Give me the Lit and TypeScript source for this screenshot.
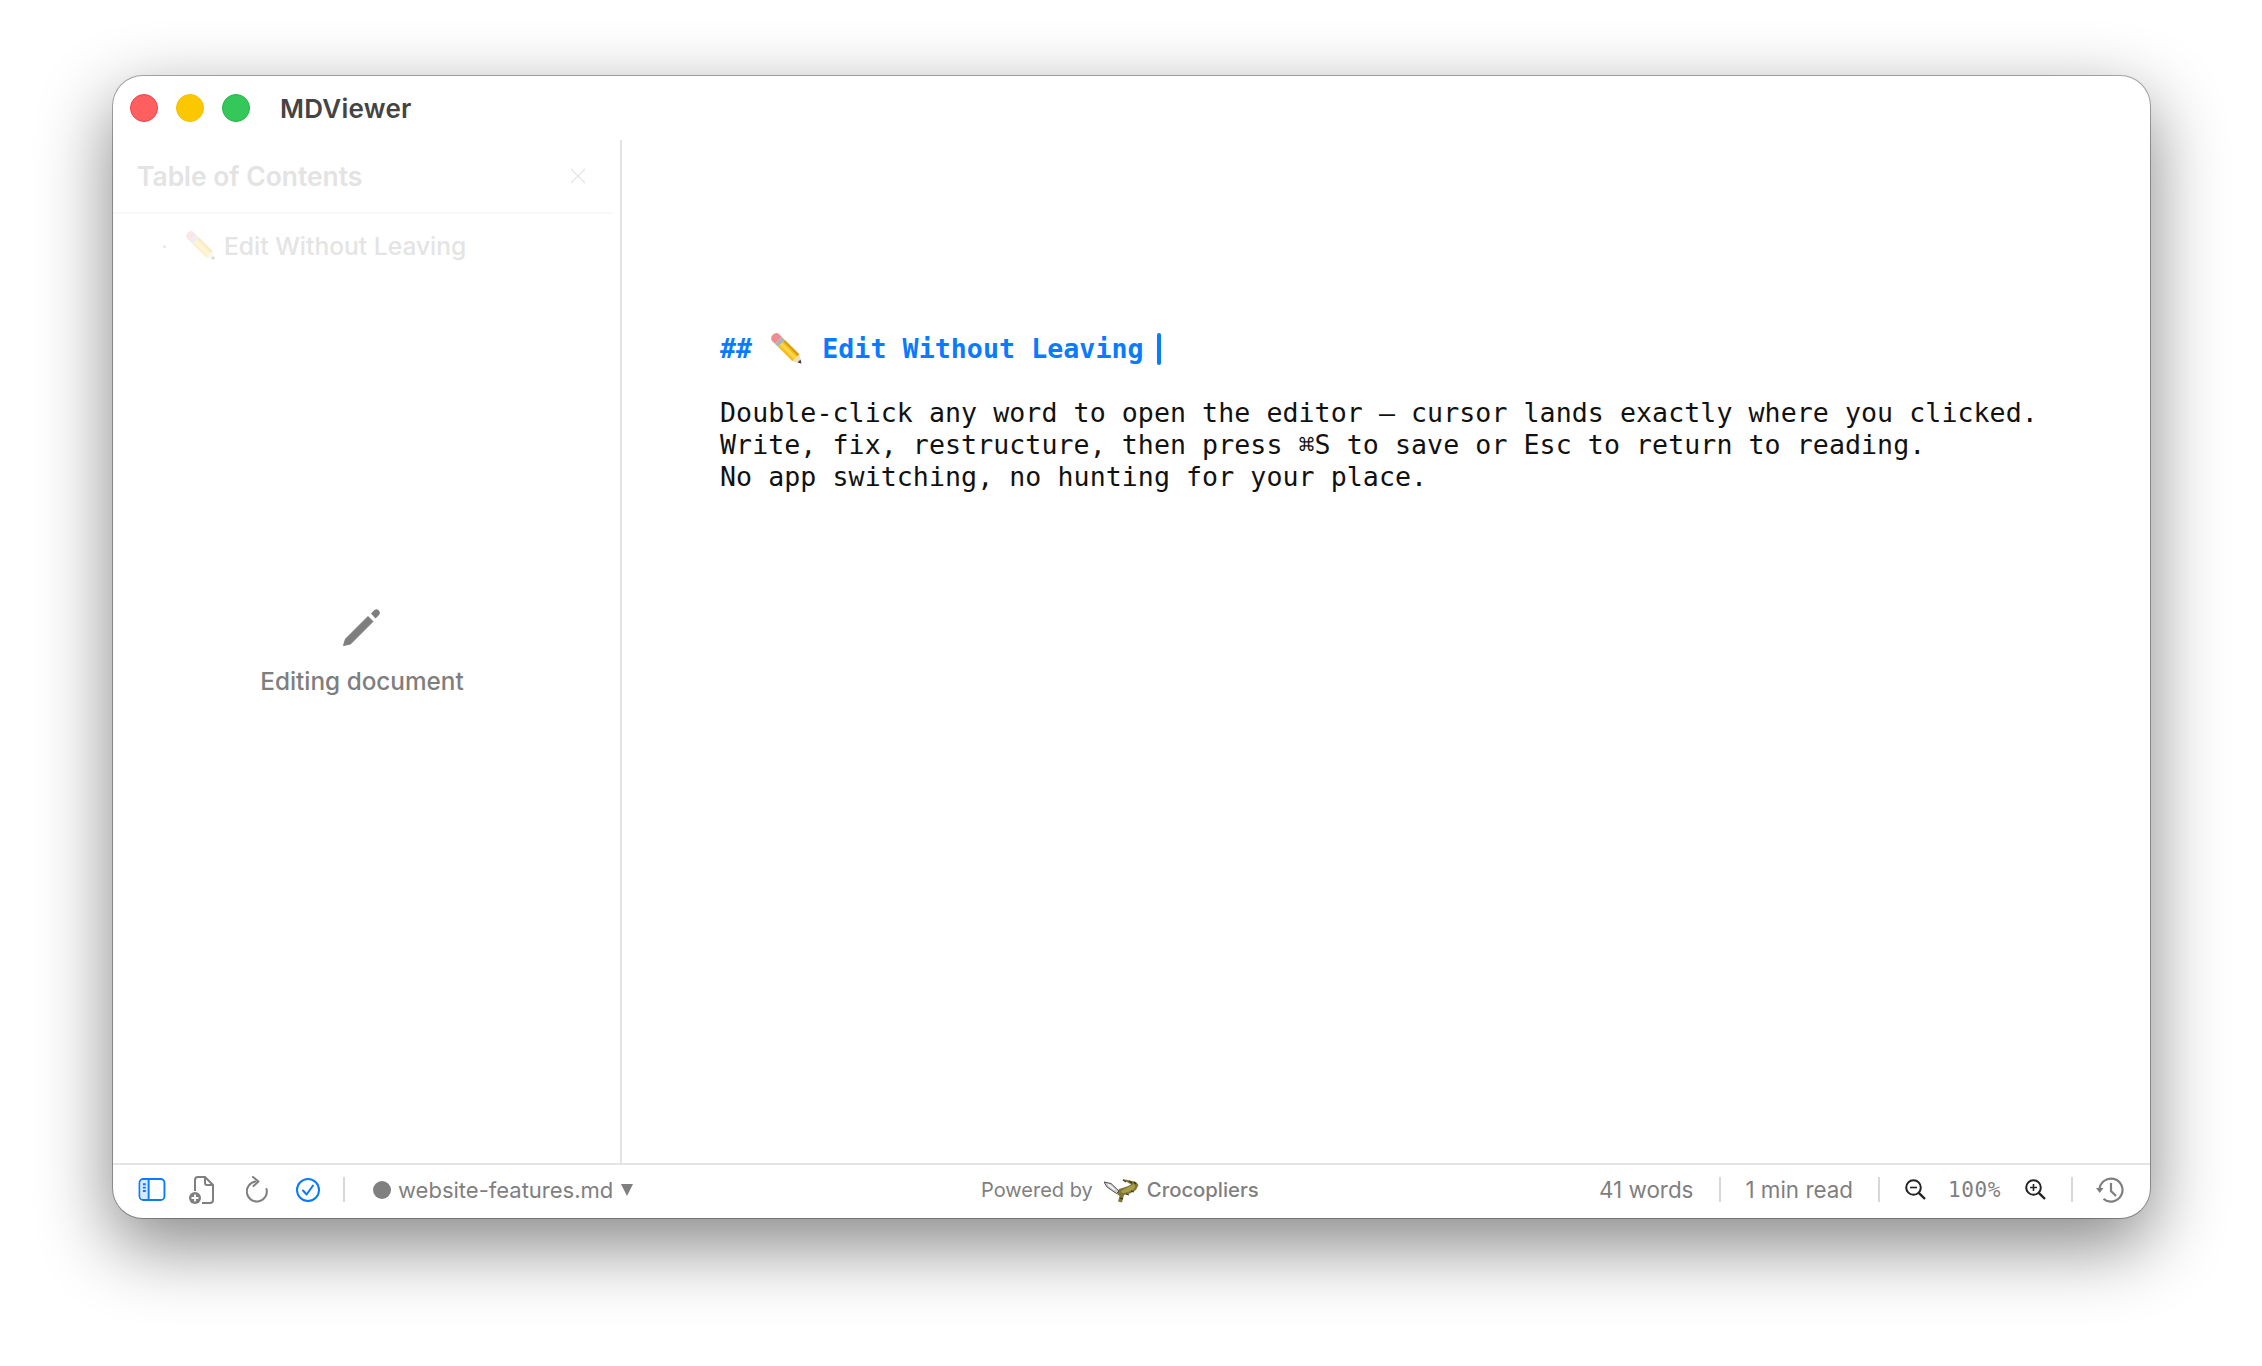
import { LitElement, html, css } from "lit";
import { customElement } from "lit/decorators.js";

const pencil = (cls: string) => html`<svg class=${cls} viewBox="0 0 36 36" aria-hidden="true">
  <g transform="rotate(225 18 18)">
    <path d="M-5 18 L4 12.5 V23.5 Z" fill="#f0dcb8"/>
    <path d="M-5 18 L-1.2 15.7 V20.3 Z" fill="#3c3c3c"/>
    <rect x="4" y="12.5" width="23" height="11" fill="#f6bf1e"/>
    <rect x="4" y="15.6" width="23" height="3.6" fill="#fcd548"/>
    <rect x="4" y="21" width="23" height="2.5" fill="#dc9c10"/>
    <rect x="27" y="12.5" width="4.5" height="11" fill="#a9b4bd"/>
    <path d="M31.5 12.5 H35.5 Q40.5 12.5 40.5 18 Q40.5 23.5 35.5 23.5 H31.5 Z" fill="#ee8c92"/>
  </g>
</svg>`;

@customElement("app-root")
export class AppRoot extends LitElement {
  static styles = css`
    :host {
      display: block;
      width: 2262px;
      height: 1366px;
      background: #fff;
      overflow: hidden;
      font-family: Inter, "Noto Sans", sans-serif;
    }
    .page { padding: 76px 112px 0 113px; }
    .window {
      width: 2037px;
      height: 1142px;
      border-radius: 30px;
      background: #fff;
      display: flex;
      flex-direction: column;
      box-shadow: 0 0 0 1px rgba(0,0,0,.3), 0 26px 72px 2px rgba(0,0,0,.47);
      overflow: hidden;
    }
    .titlebar {
      height: 64px;
      flex: none;
      display: flex;
      align-items: center;
      padding-left: 17px;
      box-sizing: border-box;
    }
    .light { width: 26px; height: 26px; border-radius: 50%; border: 1px solid; margin-right: 18px; box-sizing: content-box; }
    .red { background: #ff5f5f; border-color: #f0404a; }
    .yellow { background: #fbc800; border-color: #f2bf00; }
    .green { background: #34c759; border-color: #1fb840; margin-right: 30px; }
    .title { font-size: 26px; font-weight: 600; color: #444; letter-spacing: .25px; }
    .main { flex: 1; display: flex; min-height: 0; }
    .sidebar {
      width: 507px;
      flex: none;
      border-right: 2px solid #e4e4e4;
      position: relative;
      box-sizing: content-box;
    }
    .toc-head {
      height: 74px;
      margin-right: 8px;
      border-bottom: 2px solid #f8f8f8;
      display: flex;
      align-items: center;
      justify-content: space-between;
      padding: 0 26px 0 24px;
      box-sizing: border-box;
      color: #e3e3e3;
      font-size: 26.4px;
      font-weight: 600;
    }
    .toc-close { width: 16px; height: 16px; }
    .toc-item {
      display: flex;
      align-items: center;
      height: 64px;
      padding-left: 50px;
      color: #e4e4e4;
      font-size: 24.6px;
      font-weight: 500;
    }
    .toc-dot { width: 3px; height: 3px; border-radius: 50%; background: #e8e8e8; margin-right: 20px; }
    .toc-pencil { width: 30px; height: 30px; opacity: .22; margin-right: 8px; }
    .overlay {
      position: absolute;
      left: 0; right: 9px; top: 1px; bottom: 0;
      display: flex;
      flex-direction: column;
      align-items: center;
      justify-content: center;
      gap: 20px;
      color: #7e7e7e;
    }
    .overlay svg { width: 38px; height: 38px; }
    .overlay span { font-size: 24.3px; font-weight: 500; line-height: 30px; }
    .editor {
      flex: 1;
      padding: 193px 0 0 98px;
      font-family: "DejaVu Sans Mono", "Liberation Mono", monospace;
      font-size: 26.6px;
      line-height: 32px;
      color: #111;
      white-space: pre;
      letter-spacing: .06px;
    }
    .h { color: #0a7aff; font-weight: 700; display: flex; align-items: center; height: 32px; margin-bottom: 32px; }
    .emoji { width: 32px; height: 32px; margin: 0 19px 0 3px; flex: none; }
    .caret { display: inline-block; width: 4px; height: 32px; border-radius: 2px; background: #0a7aff; margin-left: 13px; }
    .statusbar {
      height: 55px;
      flex: none;
      border-top: 2px solid #e4e4e4;
      display: flex;
      align-items: center;
      box-sizing: border-box;
      color: #7f7f7f;
      font-size: 22px;
      padding: 0 26px 4px 25px;
      white-space: nowrap;
    }
    .icon { display: block; flex: none; }
    .sep { width: 2px; height: 25px; background: #d8d8d8; flex: none; }
    .dot { width: 18px; height: 18px; border-radius: 50%; background: #808080; flex: none; }
    .tri { width: 0; height: 0; border-left: 6px solid transparent; border-right: 6px solid transparent; border-top: 12px solid #7f7f7f; flex: none; }
    .left { display: flex; align-items: center; width: 843px; flex: none; }
    .center { display: flex; align-items: center; font-size: 20px; flex: none; }
    .brand { font-weight: 500; font-size: 20.3px; }
    .right { display: flex; align-items: center; margin-left: auto; }
    .stat { font-size: 22.4px; }
    .mono { font-family: "DejaVu Sans Mono", monospace; font-size: 21px; letter-spacing: .6px; }
  `;

  render() {
    return html`<div class="page"><div class="window">
      <div class="titlebar">
        <div class="light red"></div><div class="light yellow"></div><div class="light green"></div>
        <div class="title">MDViewer</div>
      </div>
      <div class="main">
        <aside class="sidebar">
          <div class="toc-head"><span>Table of Contents</span>
            <svg class="toc-close" viewBox="0 0 16 16"><path d="M1 1 15 15M15 1 1 15" stroke="#e6e6e6" stroke-width="1.4" fill="none"/></svg>
          </div>
          <div class="toc-item"><span class="toc-dot"></span>${pencil("toc-pencil")}<span>Edit Without Leaving</span></div>
          <div class="overlay">
            <svg viewBox="0 0 38 38"><path d="M.5 37.5 2.5 31 25 8.5 30 13.5 7.5 36Z" fill="#7e7e7e" stroke="#7e7e7e" stroke-linejoin="round"/><path d="M28 5.5 31.5 2Q33.5.5 35.5 2.2L36.3 3Q37.8 5 36 7L32.5 10.5Z" fill="#7e7e7e"/></svg>
            <span>Editing document</span>
          </div>
        </aside>
        <section class="editor"><div class="h">## ${pencil("emoji")}<span>Edit Without Leaving</span><span class="caret"></span></div><div>Double-click any word to open the editor — cursor lands exactly where you clicked.
Write, fix, restructure, then press ⌘S to save or Esc to return to reading.
No app switching, no hunting for your place.</div></section>
      </div>
      <footer class="statusbar">
        <div class="left">
          <svg class="icon" width="28" height="23" viewBox="0 0 28 24" style="margin-right:23px"><rect x="1" y="1" width="26" height="22" rx="4" fill="#fff" stroke="#0a7aff" stroke-width="2"/><path d="M2 5a3 3 0 0 1 3-3h5v20H5a3 3 0 0 1-3-3Z" fill="#d7e9ff"/><path d="M10.5 1v22" stroke="#0a7aff" stroke-width="2"/><path d="M4.5 6.5h3M4.5 10h3M4.5 13.5h3" stroke="#0a7aff" stroke-width="2"/></svg>
          <svg class="icon" width="26" height="28" viewBox="0 0 26 28" style="margin-right:31px"><path d="M6 15V4a3 3 0 0 1 3-3h7l8 8v15a3 3 0 0 1-3 3h-8" fill="none" stroke="#7f7f7f" stroke-width="2"/><path d="M16 1v6a2 2 0 0 0 2 2h6" fill="none" stroke="#7f7f7f" stroke-width="2"/><circle cx="6" cy="22" r="6" fill="#7f7f7f"/><path d="M6 18.5v7M2.5 22h7" stroke="#fff" stroke-width="1.8"/></svg>
          <svg class="icon" width="22" height="28" viewBox="0 0 22 28" style="margin-right:28px"><path d="M9.5 5.6A10 10 0 1 0 20.5 13" fill="none" stroke="#7f7f7f" stroke-width="2" stroke-linecap="round"/><path d="M7 1l5.5 4.6L7.5 10" fill="none" stroke="#7f7f7f" stroke-width="2" stroke-linecap="round" stroke-linejoin="round"/></svg>
          <svg class="icon" width="24" height="24" viewBox="0 0 24 24" style="margin-right:23px"><circle cx="12" cy="12" r="11" fill="#fff" stroke="#0a7aff" stroke-width="2"/><path d="M7 12.5l3.6 4L17 7.5" fill="none" stroke="#0a7aff" stroke-width="2" stroke-linecap="round" stroke-linejoin="round"/></svg>
          <div class="sep" style="margin-right:28px"></div>
          <div class="dot" style="margin-right:7px"></div>
          <span style="margin-right:8px">website-features.md</span>
          <div class="tri"></div>
        </div>
        <div class="center">
          <span>Powered by</span>
          <svg class="icon" width="36" height="26" viewBox="5 4 36 26" style="margin:0 7px 0 11px">
            <path d="M23 6 Q30 7 37 9 L39.5 12 L37 17 L31 20.5 L25 22 L23 29.5 L19 28.5 L20.5 23 L18 21 L20 16 L28 13.5 L32 11.5 Z" fill="#7f7636"/>
            <path d="M22 18 Q28 15 35 11 Q37 13 35 16 Q29 20 23 20Z" fill="#a89d4c"/>
            <path d="M24 7l3 2M30 8l3 2M35 9l2 2M21 25l3 1M27 21l3 1M32 18l3 1" stroke="#37331a" stroke-width="1.1"/>
            <path d="M5 9 L12 10.5 L20 18 L17.5 20.5 L8 14Z" fill="#cfcfcf" stroke="#3e3e3e" stroke-width=".9"/>
            <path d="M9 11.5 16 17" stroke="#fff" stroke-width="1.3"/>
          </svg>
          <span class="brand">Crocopliers</span>
        </div>
        <div class="right">
          <span class="stat" style="margin-right:26px">41 words</span>
          <div class="sep" style="margin-right:24px"></div>
          <span class="stat" style="margin-right:25px">1 min read</span>
          <div class="sep" style="margin-right:24.5px"></div>
          <svg class="icon" width="21" height="21" viewBox="0 0 21 21" style="margin-right:22.5px"><circle cx="8.5" cy="8.5" r="7.3" fill="none" stroke="#222" stroke-width="2"/><path d="M13.8 13.8 20 20" stroke="#222" stroke-width="2.4"/><path d="M5 8.5h7" stroke="#222" stroke-width="1.6"/></svg>
          <span class="mono" style="margin-right:23.5px">100%</span>
          <svg class="icon" width="21" height="21" viewBox="0 0 21 21" style="margin-right:25.5px"><circle cx="8.5" cy="8.5" r="7.3" fill="none" stroke="#222" stroke-width="2"/><path d="M13.8 13.8 20 20" stroke="#222" stroke-width="2.4"/><path d="M5 8.5h7M8.5 5v7" stroke="#222" stroke-width="1.6"/></svg>
          <div class="sep" style="margin-right:23px"></div>
          <svg class="icon" width="28" height="26" viewBox="0 0 28 26"><path d="M3.5 13a11.5 11.5 0 1 1 4 8.8" fill="none" stroke="#7f7f7f" stroke-width="2.2"/><path d="M0 11h7.5l-3.7 5Z" fill="#7f7f7f"/><path d="M15 6v8l5 5" fill="none" stroke="#7f7f7f" stroke-width="2.2"/></svg>
        </div>
      </footer>
    </div></div>`;
  }
}
